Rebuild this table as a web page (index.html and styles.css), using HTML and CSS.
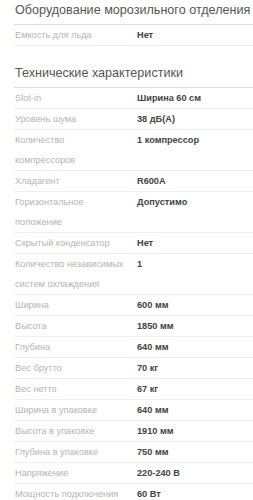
FILE: index.html
```html
<!DOCTYPE html>
<html lang="ru">
<head>
<meta charset="utf-8">
<link rel="stylesheet" href="styles.css">
</head>
<body>
<div class="page">
  <section class="group">
    <h2 class="group-title">Оборудование морозильного отделения</h2>
    <div class="row"><div class="label">Емкость для льда</div><div class="value">Нет</div></div>
  </section>
  <section class="group">
    <h2 class="group-title">Технические характеристики</h2>
    <div class="row"><div class="label">Slot-in</div><div class="value">Ширина 60 см</div></div>
    <div class="row"><div class="label">Уровень шума</div><div class="value">38 дБ(А)</div></div>
    <div class="row"><div class="label">Количество компрессоров</div><div class="value">1 компрессор</div></div>
    <div class="row"><div class="label">Хладагент</div><div class="value">R600A</div></div>
    <div class="row"><div class="label">Горизонтальное положение</div><div class="value">Допустимо</div></div>
    <div class="row"><div class="label">Скрытый конденсатор</div><div class="value">Нет</div></div>
    <div class="row"><div class="label">Количество независимых систем охлаждения</div><div class="value">1</div></div>
    <div class="row"><div class="label">Ширина</div><div class="value">600 мм</div></div>
    <div class="row"><div class="label">Высота</div><div class="value">1850 мм</div></div>
    <div class="row"><div class="label">Глубина</div><div class="value">640 мм</div></div>
    <div class="row"><div class="label">Вес брутто</div><div class="value">70 кг</div></div>
    <div class="row"><div class="label">Вес нетто</div><div class="value">67 кг</div></div>
    <div class="row"><div class="label">Ширина в упаковке</div><div class="value">640 мм</div></div>
    <div class="row"><div class="label">Высота в упаковке</div><div class="value">1910 мм</div></div>
    <div class="row"><div class="label">Глубина в упаковке</div><div class="value">750 мм</div></div>
    <div class="row"><div class="label">Напряжение</div><div class="value">220-240 В</div></div>
    <div class="row"><div class="label">Мощность подключения</div><div class="value">60 Вт</div></div>
  </section>
</div>
</body>
</html>
```
FILE: styles.css
```css
html, body {
  margin: 0;
  padding: 0;
  background: #ffffff;
}
body {
  font-family: "Liberation Sans", Arial, sans-serif;
  overflow: hidden;
}
.page {
  padding-left: 14px;
}
.group {
  margin-bottom: 17px;
}
.group-title {
  margin: 0;
  font-size: 12.6px;
  font-weight: normal;
  line-height: 20px;
  color: #555555;
  padding-left: 1px;
  padding-bottom: 4px;
  border-bottom: 1px solid #dcdcdc;
  white-space: nowrap;
}
.row {
  display: grid;
  grid-template-columns: 123px 1fr;
  border-bottom: 1px solid #eeeeee;
  font-size: 9.2px;
  line-height: 20px;
}
.label {
  color: #b4b4b4;
  padding-left: 1px;
  padding-right: 12px;
}
.value {
  color: #444444;
  font-weight: bold;
}
```
